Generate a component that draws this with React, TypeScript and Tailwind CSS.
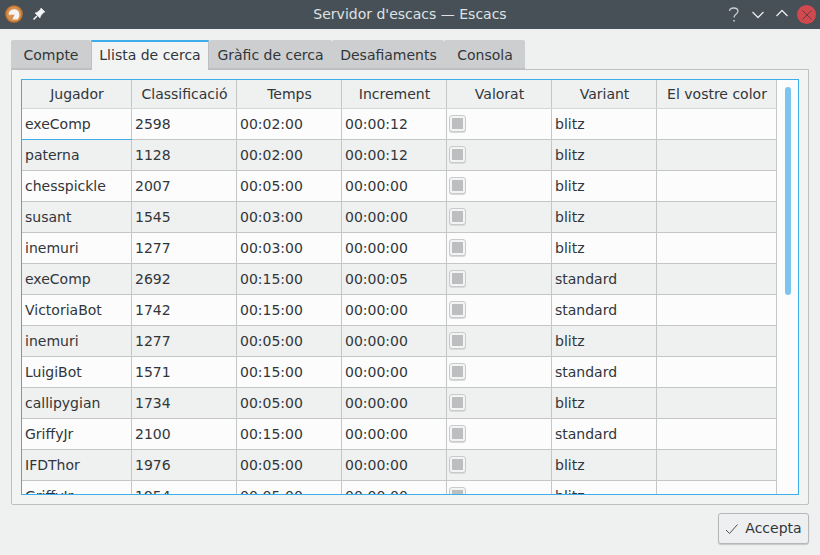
import React from "react";

const rows: [string, string, string, string, string][] = [
  ["exeComp", "2598", "00:02:00", "00:00:12", "blitz"],
  ["paterna", "1128", "00:02:00", "00:00:12", "blitz"],
  ["chesspickle", "2007", "00:05:00", "00:00:00", "blitz"],
  ["susant", "1545", "00:03:00", "00:00:00", "blitz"],
  ["inemuri", "1277", "00:03:00", "00:00:00", "blitz"],
  ["exeComp", "2692", "00:15:00", "00:00:05", "standard"],
  ["VictoriaBot", "1742", "00:15:00", "00:00:00", "standard"],
  ["inemuri", "1277", "00:05:00", "00:00:00", "blitz"],
  ["LuigiBot", "1571", "00:15:00", "00:00:00", "standard"],
  ["callipygian", "1734", "00:05:00", "00:00:00", "blitz"],
  ["GriffyJr", "2100", "00:15:00", "00:00:00", "standard"],
  ["IFDThor", "1976", "00:05:00", "00:00:00", "blitz"],
  ["GriffyJr", "1954", "00:05:00", "00:00:00", "blitz"],
];

const headers: [string, string][] = [
  ["Jugador", "w-[110px]"],
  ["Classificació", "w-[105px]"],
  ["Temps", "w-[105px]"],
  ["Increment", "w-[105px]"],
  ["Valorat", "w-[105px]"],
  ["Variant", "w-[105px]"],
  ["El vostre color", "w-[120px]"],
];

const tabs = ["Compte", "Llista de cerca", "Gràfic de cerca", "Desafiaments", "Consola"];
const tabWidths = ["w-[80px]", "w-[118px]", "w-[123px]", "w-[112px]", "w-[81px]"];

function Cell({ w, children }: { w: string; children?: React.ReactNode }) {
  return (
    <div className={`${w} shrink-0 h-full border-r border-[#c4c6c7] flex items-center pl-[3px] relative`}>
      {children}
    </div>
  );
}

function Check() {
  return (
    <div className="-ml-px -mt-px w-[17px] h-[17px] rounded-[3px] border border-[#c8cacb] bg-[#f3f4f4] flex items-center justify-center shadow-[0_1px_0_#d8d9da]">
      <div className="w-[11px] h-[11px] bg-[#bcbebf]" />
    </div>
  );
}

export default function App() {
  return (
    <div
      className="w-[820px] h-[555px] bg-[#eff0f0] flex flex-col overflow-hidden text-[#31363b] text-[14px]"
      style={{ fontFamily: '"DejaVu Sans", sans-serif' }}
    >
      <div className="h-[29px] shrink-0 bg-[#475057] flex items-center relative text-[#e3e5e7]">
        <div className="absolute left-[5px] top-[5px]">
          <svg width="18" height="18" viewBox="0 0 18 18">
            <circle cx="9" cy="9" r="8.8" fill="#c4722e" />
            <circle cx="9" cy="9" r="7.4" fill="#d5904f" />
            <path d="M3.5 9 C4 5.5 7 3.8 10 4.2 C13.5 4.8 15 8 14.3 11 C14 12.5 13.3 13.6 12.5 14.5 L7.5 14.5 C7.8 12.5 9.2 11.2 9.6 9.4 L7.3 10 L6.3 9.3 L5 10.4 Z" fill="#f6f3f0" />
          </svg>
        </div>
        <div className="absolute left-[32px] top-[7px]">
          <svg width="14" height="14" viewBox="0 0 14 14" fill="#f4f5f6" stroke="#f4f5f6">
            <path d="M9 1 L13 5 L11.5 5.5 L8.5 9 L8 11 L3 6 L5 5.5 L8.5 2.5 Z" strokeWidth="0.6" />
            <path d="M5 9 L1.5 12.5" strokeWidth="1.6" fill="none" />
          </svg>
        </div>
        <div className="w-full text-center text-[14px] text-[#dfe2e4]">Servidor d'escacs — Escacs</div>
        <svg className="absolute left-[728px] top-[7px]" width="12" height="16" viewBox="0 0 12 16" fill="none" stroke="#c9cdd0" strokeWidth="1.3">
          <path d="M1.5 4 C1.8 1.8 3.6 1 5.6 1 C8 1 10 2.2 10 4.3 C10 7 6 7.2 6 10.6" />
          <path d="M6 13 L6 14.6" strokeWidth="1.6" />
        </svg>
        <svg className="absolute left-[752px] top-[9px]" width="12" height="10" viewBox="0 0 12 10" fill="none" stroke="#e8eaec" strokeWidth="1.3">
          <path d="M0.5 3 L6 8.5 L11.5 3" />
        </svg>
        <svg className="absolute left-[776px] top-[8px]" width="12" height="10" viewBox="0 0 12 10" fill="none" stroke="#e8eaec" strokeWidth="1.3">
          <path d="M0.5 8 L6 2.5 L11.5 8" />
        </svg>
        <div className="absolute left-[797px] top-[5px] w-[19px] h-[19px] rounded-full bg-[#d0494f] flex items-center justify-center">
          <svg width="10" height="10" viewBox="0 0 10 10" stroke="#6e3a40" strokeWidth="1">
            <path d="M0.5 0.5 L9.5 9.5 M9.5 0.5 L0.5 9.5" />
          </svg>
        </div>
      </div>

      <div className="flex-1 flex flex-col pt-[11px] px-[11px] min-h-0">
        <div className="flex h-[30px] shrink-0 relative z-10">
          {tabs.map((t, i) => (
            <div
              key={t}
              className={
                i === 1
                  ? `${tabWidths[i]} h-[30px] pb-[2px] bg-[#f2f3f3] border-t-2 border-t-[#3daee9] border-x border-x-[#bdbfc0] flex items-center justify-center`
                  : `${tabWidths[i]} h-[29px] pt-[2px] ${i > 2 ? "pl-[1px]" : ""} bg-[#cdcecf] border-b border-b-[#bdbfc0] flex items-center justify-center rounded-t-[2px]`
              }
            >
              {t}
            </div>
          ))}
        </div>
        <div className="w-[798px] h-[436px] -mt-px shrink-0 bg-[#f2f3f3] border border-[#bdbfc0] rounded-b-[2px] pt-[9px] pl-[9px]">
          <div className="w-[778px] h-[416px] border border-[#3daee9] bg-[#fcfcfc] flex overflow-hidden relative">
            <div className="w-[755px] shrink-0 flex flex-col">
              <div className="h-[29px] shrink-0 flex bg-[#eff0f0] border-b border-[#d5d6d7]">
                {headers.map(([h, w]) => (
                  <div key={h} className={`${w} shrink-0 h-full pl-[1px] border-r border-[#c4c6c7] flex items-center justify-center`}>
                    {h}
                  </div>
                ))}
              </div>
              {rows.map((r, i) => (
                <div
                  key={i}
                  className={`h-[31px] shrink-0 flex border-b border-[#c4c6c7] ${i % 2 ? "bg-[#eff0f0]" : "bg-[#fcfcfc]"}`}
                >
                  <Cell w="w-[110px]">
                    {r[0]}
                    {i === 0 && <div className="absolute left-0 right-[-1px] bottom-[-1px] h-px bg-[#3daee9]" />}
                  </Cell>
                  <Cell w="w-[105px]">{r[1]}</Cell>
                  <Cell w="w-[105px]">{r[2]}</Cell>
                  <Cell w="w-[105px]">{r[3]}</Cell>
                  <Cell w="w-[105px]"><Check /></Cell>
                  <Cell w="w-[105px]">{r[4]}</Cell>
                  <Cell w="w-[120px]" />
                </div>
              ))}
            </div>
            <div className="flex-1 pl-[8px] pt-[7px]">
              <div className="w-[6px] h-[208px] rounded-[3px] bg-[#7cc5ef]" />
            </div>
          </div>
        </div>
        <div className="flex justify-end pt-[8px]">
          <div className="w-[91px] h-[31px] rounded-[3px] border border-[#b5b7b8] bg-[#eeeff0] shadow-[0_1px_1px_#c5c6c7] flex items-center justify-center gap-[6px]">
            <svg width="14" height="12" viewBox="0 0 14 12" fill="none" stroke="#4a5056" strokeWidth="1">
              <path d="M1 7 L4.5 10.5 L12.5 1.5" />
            </svg>
            <span>Accepta</span>
          </div>
        </div>
      </div>
    </div>
  );
}
